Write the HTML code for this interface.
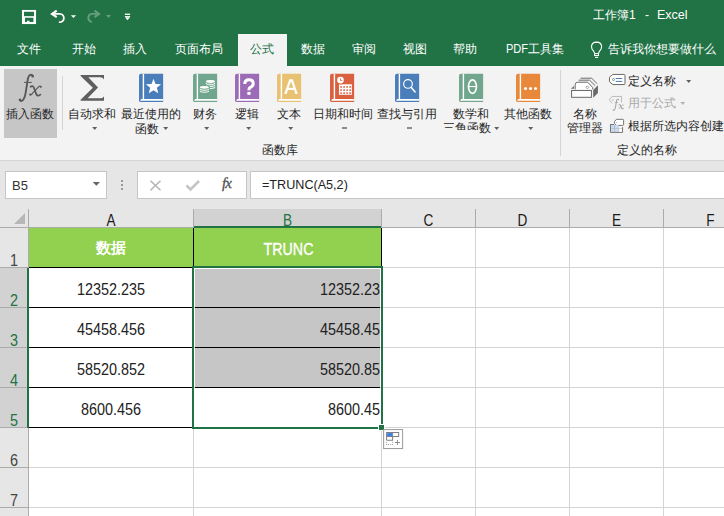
<!DOCTYPE html>
<html><head><meta charset="utf-8">
<style>
*{margin:0;padding:0;box-sizing:border-box}
html,body{width:724px;height:516px;overflow:hidden;background:#fff;font-family:"Liberation Sans",sans-serif}
.a{position:absolute}
.t{position:absolute;white-space:nowrap;line-height:1}
#title{left:0;top:0;width:724px;height:66px;background:#217346}
#ribbon{left:0;top:66px;width:724px;height:94px;background:#f3f3f3}
#rbl{left:0;top:160px;width:724px;height:1px;background:#d5d5d5}
#fbar{left:0;top:161px;width:724px;height:66px;background:#e6e6e6}
.tab{color:#fff;font-size:12px}
.rt{color:#262626;font-size:12px;font-weight:500}
.gl{background:#d4d4d4}
.hl{background:#ababab}
.cell{position:absolute;white-space:nowrap;line-height:1;font-size:15px;color:#222}
</style></head><body>
<div id="title" class="a"></div>
<div id="ribbon" class="a"></div>
<div id="rbl" class="a"></div>
<div id="fbar" class="a"></div>

<!-- active tab -->
<div class="a" style="left:238px;top:34px;width:49px;height:32px;background:#f3f3f3"></div>

<!-- tabs text -->
<div class="t tab" style="left:17px;top:43px">文件</div>
<div class="t tab" style="left:72px;top:43px">开始</div>
<div class="t tab" style="left:123px;top:43px">插入</div>
<div class="t tab" style="left:175px;top:43px">页面布局</div>
<div class="t tab" style="left:250px;top:43px;color:#217346">公式</div>
<div class="t tab" style="left:301px;top:43px">数据</div>
<div class="t tab" style="left:352px;top:43px">审阅</div>
<div class="t tab" style="left:403px;top:43px">视图</div>
<div class="t tab" style="left:453px;top:43px">帮助</div>
<div class="t tab" style="left:506px;top:43px"><span style="display:inline-block;transform:scaleX(.92);transform-origin:left;margin-right:-2px">PDF</span>工具集</div>
<div class="t tab" style="left:608px;top:43px">告诉我你想要做什么</div>
<div class="t tab" style="left:593px;top:9px">工作簿1</div><div class="t tab" style="left:645px;top:9px">-</div><div class="t tab" style="left:657px;top:9px;font-size:12.5px">Excel</div>

<!-- formula bar -->
<div class="a" style="left:5px;top:171px;width:102px;height:28px;background:#fff;border:1px solid #c6c6c6"></div>
<div class="t" style="left:12px;top:179px;font-size:13px;color:#333">B5</div>
<div class="a" style="left:137px;top:171px;width:110px;height:28px;background:#fff;border:1px solid #c6c6c6"></div>
<div class="a" style="left:250px;top:171px;width:474px;height:28px;background:#fff;border:1px solid #c6c6c6;border-right:none"></div>
<div class="t" style="left:262px;top:178px;font-size:13px;color:#222;transform:scaleX(.97);transform-origin:left">=TRUNC(A5,2)</div>

<!-- grid -->
<div id="rib">
<div class="a" style="left:4px;top:69px;width:53px;height:69px;background:#c6c6c6"></div>
<svg class="a" style="left:14px;top:70px" width="32" height="36" viewBox="0 0 459 516"><path d="M272 88Q258 58 228 72Q202 88 193 165L168 320Q152 420 118 440Q92 452 82 428" fill="none" stroke="#585858" stroke-width="27" stroke-linecap="round"/><circle cx="268" cy="90" r="17" fill="#585858"/><circle cx="86" cy="425" r="17" fill="#585858"/><path d="M145 178H255" stroke="#585858" stroke-width="15"/><path d="M238 240Q272 215 290 265L318 342Q335 388 378 352" fill="none" stroke="#585858" stroke-width="25" stroke-linecap="round"/><path d="M388 238Q372 218 345 248L258 342Q238 370 226 352" fill="none" stroke="#585858" stroke-width="16" stroke-linecap="round"/><circle cx="383" cy="242" r="14" fill="#585858"/><circle cx="232" cy="352" r="14" fill="#585858"/></svg>
<div class="t rt" style="left:6px;top:108px;">插入函数</div>
<div class="a" style="left:62px;top:76px;width:1px;height:54px;background:#d4d4d4"></div>
<svg class="a" style="left:74px;top:70px" width="36" height="36" viewBox="0 0 516 516"><path d="M95 70H430V135Q420 108 380 105H205L345 250L195 405H385Q420 402 430 375V440H95V425L270 255L95 85Z" fill="#5f5f5f"/></svg>
<div class="t rt" style="left:68px;top:108px;">自动求和</div>
<svg class="a" style="left:92px;top:127px" width="6" height="4" viewBox="0 0 6 4"><path d="M0.2 0H5.2L2.7 3Z" fill="#606060"/></svg>
<svg class="a" style="left:134px;top:70px" width="35" height="36" viewBox="0 0 502 516"><path d="M100 55H418V460H100Q72 460 72 432V83Q72 55 100 55Z" fill="#4a7ebb"/><rect x="125" y="55" width="20" height="362" fill="#fff"/><path d="M86 440L104 415H418V440Z" fill="#fff"/><polygon points="280,125 309,200 389,204 328,255 348,333 280,290 212,333 232,255 171,204 251,200" fill="#fff"/></svg>
<div class="t rt" style="left:121px;top:108px;">最近使用的</div>
<div class="t rt" style="left:135px;top:123px;">函数</div>
<svg class="a" style="left:163px;top:127px" width="6" height="4" viewBox="0 0 6 4"><path d="M0.2 0H5.2L2.7 3Z" fill="#606060"/></svg>
<svg class="a" style="left:188px;top:70px" width="35" height="36" viewBox="0 0 502 516"><path d="M100 55H418V460H100Q72 460 72 432V83Q72 55 100 55Z" fill="#6fa68d"/><rect x="125" y="55" width="20" height="362" fill="#fff"/><path d="M86 440L104 415H418V440Z" fill="#fff"/><path d="M260 185A62 20 0 0 0 384 185" fill="none" stroke="#fff" stroke-width="15"/><path d="M260 215A62 20 0 0 0 384 215" fill="none" stroke="#fff" stroke-width="15"/><path d="M260 245A62 20 0 0 0 384 245" fill="none" stroke="#fff" stroke-width="15"/><ellipse cx="322" cy="165" rx="64" ry="21" fill="#fff"/><path d="M168 249V329A67 22 0 0 0 302 329V249Z" fill="#6fa68d" stroke="#6fa68d" stroke-width="24"/><ellipse cx="235" cy="249" rx="67" ry="22" fill="#6fa68d" stroke="#6fa68d" stroke-width="24"/><path d="M173 269A62 20 0 0 0 297 269" fill="none" stroke="#fff" stroke-width="15"/><path d="M173 299A62 20 0 0 0 297 299" fill="none" stroke="#fff" stroke-width="15"/><ellipse cx="235" cy="249" rx="64" ry="21" fill="#fff"/></svg>
<div class="t rt" style="left:193px;top:108px;">财务</div>
<svg class="a" style="left:204px;top:127px" width="6" height="4" viewBox="0 0 6 4"><path d="M0.2 0H5.2L2.7 3Z" fill="#606060"/></svg>
<svg class="a" style="left:230px;top:70px" width="35" height="36" viewBox="0 0 502 516"><path d="M100 55H418V460H100Q72 460 72 432V83Q72 55 100 55Z" fill="#9b6bb7"/><rect x="125" y="55" width="20" height="362" fill="#fff"/><path d="M86 440L104 415H418V440Z" fill="#fff"/><path d="M212 200Q212 140 272 140Q333 140 333 195Q333 232 292 250Q272 260 272 280V292" fill="none" stroke="#fff" stroke-width="44"/><rect x="249" y="314" width="46" height="42" fill="#fff"/></svg>
<div class="t rt" style="left:235px;top:108px;">逻辑</div>
<svg class="a" style="left:246px;top:127px" width="6" height="4" viewBox="0 0 6 4"><path d="M0.2 0H5.2L2.7 3Z" fill="#606060"/></svg>
<svg class="a" style="left:272px;top:70px" width="35" height="36" viewBox="0 0 502 516"><path d="M100 55H418V460H100Q72 460 72 432V83Q72 55 100 55Z" fill="#e8c173"/><rect x="125" y="55" width="20" height="362" fill="#fff"/><path d="M86 440L104 415H418V440Z" fill="#fff"/><path d="M176 345L248 132H298L370 345H336L317 288H229L210 345ZM239 256H307L273 160Z" fill="#fff" fill-rule="evenodd"/></svg>
<div class="t rt" style="left:277px;top:108px;">文本</div>
<svg class="a" style="left:288px;top:127px" width="6" height="4" viewBox="0 0 6 4"><path d="M0.2 0H5.2L2.7 3Z" fill="#606060"/></svg>
<svg class="a" style="left:325px;top:70px" width="35" height="36" viewBox="0 0 502 516"><path d="M100 55H418V460H100Q72 460 72 432V83Q72 55 100 55Z" fill="#d9613f"/><rect x="125" y="55" width="20" height="362" fill="#fff"/><path d="M86 440L104 415H418V440Z" fill="#fff"/><rect x="200" y="205" width="185" height="150" fill="#fff"/><rect x="218" y="232" width="24" height="22" fill="#d9613f"/><rect x="262" y="232" width="24" height="22" fill="#d9613f"/><rect x="305" y="232" width="24" height="22" fill="#d9613f"/><rect x="348" y="232" width="24" height="22" fill="#d9613f"/><rect x="218" y="277" width="24" height="22" fill="#d9613f"/><rect x="262" y="277" width="24" height="22" fill="#d9613f"/><rect x="305" y="277" width="24" height="22" fill="#d9613f"/><rect x="348" y="277" width="24" height="22" fill="#d9613f"/><rect x="218" y="320" width="24" height="22" fill="#d9613f"/><rect x="262" y="320" width="24" height="22" fill="#d9613f"/><rect x="305" y="320" width="24" height="22" fill="#d9613f"/><rect x="348" y="320" width="24" height="22" fill="#d9613f"/><circle cx="222" cy="145" r="62" fill="#d9613f"/><circle cx="222" cy="145" r="48" fill="#fff"/><path d="M222 118V150H248" fill="none" stroke="#d9613f" stroke-width="12"/></svg>
<div class="t rt" style="left:313px;top:108px;">日期和时间</div>
<div class="a" style="left:342px;top:127px;width:5px;height:2px;background:#8c8c8c"></div>
<svg class="a" style="left:390px;top:70px" width="35" height="36" viewBox="0 0 502 516"><path d="M100 55H418V460H100Q72 460 72 432V83Q72 55 100 55Z" fill="#4a7ebb"/><rect x="125" y="55" width="20" height="362" fill="#fff"/><path d="M86 440L104 415H418V440Z" fill="#fff"/><circle cx="258" cy="200" r="62" fill="none" stroke="#fff" stroke-width="17"/><path d="M305 250L360 315" stroke="#fff" stroke-width="22" stroke-linecap="round"/></svg>
<div class="t rt" style="left:377px;top:108px;">查找与引用</div>
<div class="a" style="left:407px;top:127px;width:5px;height:2px;background:#8c8c8c"></div>
<svg class="a" style="left:454px;top:70px" width="35" height="36" viewBox="0 0 502 516"><path d="M100 55H418V460H100Q72 460 72 432V83Q72 55 100 55Z" fill="#6fa68d"/><rect x="125" y="55" width="20" height="362" fill="#fff"/><path d="M86 440L104 415H418V440Z" fill="#fff"/><ellipse cx="265" cy="238" rx="57" ry="97" fill="none" stroke="#fff" stroke-width="24"/><rect x="210" y="229" width="110" height="16" fill="#fff"/></svg>
<div class="t rt" style="left:453px;top:108px;">数学和</div>
<div class="a" style="left:443px;top:121px;width:36px;height:9px;overflow:hidden"><div class="t rt" style="left:0;top:1px">三角函</div></div>
<div class="t rt" style="left:479px;top:122px;">数</div>
<svg class="a" style="left:494px;top:127px" width="6" height="4" viewBox="0 0 6 4"><path d="M0.2 0H5.2L2.7 3Z" fill="#606060"/></svg>
<svg class="a" style="left:511px;top:70px" width="35" height="36" viewBox="0 0 502 516"><path d="M100 55H418V460H100Q72 460 72 432V83Q72 55 100 55Z" fill="#e8883a"/><rect x="125" y="55" width="20" height="362" fill="#fff"/><path d="M86 440L104 415H418V440Z" fill="#fff"/><circle cx="208" cy="265" r="22" fill="#fff"/><circle cx="280" cy="265" r="22" fill="#fff"/><circle cx="352" cy="265" r="22" fill="#fff"/></svg>
<div class="t rt" style="left:504px;top:108px;">其他函数</div>
<svg class="a" style="left:528px;top:127px" width="6" height="4" viewBox="0 0 6 4"><path d="M0.2 0H5.2L2.7 3Z" fill="#606060"/></svg>
<div class="t rt" style="left:262px;top:144px;">函数库</div>
<div class="a" style="left:560px;top:70px;width:1px;height:86px;background:#d4d4d4"></div>
<svg class="a" style="left:566px;top:72px" width="40" height="32" viewBox="0 0 645 516"><path d="M235 100H415L500 188" fill="none" stroke="#6a6a6a" stroke-width="16"/><path d="M205 132H380L470 220" fill="none" stroke="#6a6a6a" stroke-width="16"/><path d="M148 280V205Q148 165 190 165H350L430 250V280" fill="#fff" stroke="#6a6a6a" stroke-width="16"/><rect x="327" y="230" width="34" height="34" transform="rotate(45 344 247)" fill="none" stroke="#6a6a6a" stroke-width="10"/><path d="M80 272L128 226V272Z" fill="#6a6a6a"/><rect x="90" y="298" width="320" height="110" fill="#fff" stroke="#6a6a6a" stroke-width="16"/><path d="M438 290L515 212V340L438 415Z" fill="#6a6a6a"/></svg>
<div class="t rt" style="left:573px;top:108px;">名称</div>
<div class="t rt" style="left:567px;top:122px;">管理器</div>
<svg class="a" style="left:606px;top:72px" width="22" height="18" viewBox="0 0 631 516"><path d="M195 70H520Q545 70 545 95V335Q545 360 520 360H195L100 280V150Z" fill="#fff" stroke="#666" stroke-width="28" stroke-linejoin="round"/><circle cx="215" cy="215" r="30" fill="none" stroke="#666" stroke-width="20"/><path d="M290 185H455M290 270H455" stroke="#2e6fb5" stroke-width="26" stroke-linecap="round"/></svg>
<div class="t rt" style="left:628px;top:75px;">定义名称</div>
<svg class="a" style="left:686px;top:80px" width="6" height="4" viewBox="0 0 6 4"><path d="M0.2 0H5.2L2.7 3Z" fill="#606060"/></svg>
<svg class="a" style="left:606px;top:94px" width="22" height="18" viewBox="0 0 631 516"><path d="M445 240V70H175L95 165L180 270" fill="none" stroke="#b4b4b4" stroke-width="26"/><circle cx="200" cy="170" r="22" fill="#b4b4b4"/><g transform="translate(132 94) scale(.846)"><path d="M272 88Q258 58 228 72Q202 88 193 165L168 320Q152 420 118 440Q92 452 82 428" fill="none" stroke="#a2a2a2" stroke-width="36" stroke-linecap="round"/><path d="M145 178H255" stroke="#a2a2a2" stroke-width="24"/><g transform="translate(50 20)"><path d="M238 240Q272 215 290 265L318 342Q335 388 378 352" fill="none" stroke="#a2a2a2" stroke-width="34" stroke-linecap="round"/><path d="M388 238Q372 218 345 248L258 342Q238 370 226 352" fill="none" stroke="#a2a2a2" stroke-width="24" stroke-linecap="round"/></g></g></svg>
<div class="t rt" style="left:628px;top:97px;;color:#a8a8a8">用于公式</div>
<svg class="a" style="left:680px;top:102px" width="6" height="4" viewBox="0 0 6 4"><path d="M0.2 0H5.2L2.7 3Z" fill="#b4b4b4"/></svg>
<svg class="a" style="left:606px;top:116px" width="22" height="18" viewBox="0 0 631 516"><path d="M300 95H480Q505 95 505 120V245Q505 270 480 270H300L245 215V155Z" fill="#fff" stroke="#666" stroke-width="26"/><circle cx="305" cy="183" r="14" fill="#666"/><path d="M135 245H230L300 325H470V460H135Z" fill="#fff"/><rect x="145" y="255" width="210" height="200" fill="#c5dcf2"/><path d="M135 355H470M245 255V460M360 325V460" stroke="#b4b4b4" stroke-width="18"/><path d="M128 245H230M128 240V470H475V320" fill="none" stroke="#666" stroke-width="26"/></svg>
<div class="t rt" style="left:628px;top:120px;">根据所选内容创建</div>
<div class="t rt" style="left:617px;top:144px;">定义的名称</div>
<svg class="a" style="left:586px;top:38px" width="24" height="24" viewBox="0 0 516 516"><path d="M185 322L165 285Q115 235 118 182Q125 90 227 88Q330 90 336 182Q338 235 290 285L270 322" fill="none" stroke="#fff" stroke-width="24"/><rect x="185" y="335" width="85" height="42" fill="none" stroke="#fff" stroke-width="22"/><rect x="195" y="405" width="65" height="25" fill="#fff"/></svg>
<svg class="a" style="left:0;top:0" width="60" height="35" viewBox="0 0 724 422"><rect x="265" y="120" width="170" height="170" fill="#fff"/><rect x="290" y="142" width="120" height="53" fill="#217346"/><path d="M302 215H403V265H355V250H325V265H302Z" fill="#217346"/></svg>
<svg class="a" style="left:46px;top:6px" width="34" height="22" viewBox="0 0 724 468"><path d="M228 97L128 168L228 239" fill="none" stroke="#fff" stroke-width="46"/><path d="M140 168H295A88 88 0 0 1 290 344" fill="none" stroke="#fff" stroke-width="38" stroke-linecap="round"/><path d="M530 195H640L585 255Z" fill="#fff"/></svg>
<svg class="a" style="left:82px;top:6px" width="54" height="22" viewBox="0 0 724 295" opacity="0.3"><path d="M168 62L228 106L168 150" fill="none" stroke="#fff" stroke-width="28"/><path d="M220 106H125A55 55 0 0 0 125 212" fill="none" stroke="#fff" stroke-width="26" stroke-linecap="round"/><path d="M320 120H390L355 160Z" fill="#fff"/></svg>
<svg class="a" style="left:82px;top:6px" width="54" height="22" viewBox="0 0 724 295"><rect x="575" y="102" width="70" height="18" fill="#fff"/><rect x="575" y="135" width="70" height="12" fill="#fff"/><path d="M575 150H645L610 190Z" fill="#fff"/></svg>
<svg class="a" style="left:91px;top:181px" width="10" height="6" viewBox="0 0 10 6"><path d="M1.7 1H9L5.35 4.8Z" fill="#666"/></svg>
<div class="a" style="left:121px;top:180px;width:2px;height:2px;background:#9a9a9a"></div>
<div class="a" style="left:121px;top:184px;width:2px;height:2px;background:#9a9a9a"></div>
<div class="a" style="left:121px;top:188px;width:2px;height:2px;background:#9a9a9a"></div>
<svg class="a" style="left:148px;top:179px" width="15" height="13" viewBox="0 0 15 13"><path d="M2.5 1.8L12.5 11.2M12.5 1.8L2.5 11.2" stroke="#b2b2b2" stroke-width="1.5"/></svg>
<svg class="a" style="left:185px;top:179px" width="16" height="13" viewBox="0 0 16 13"><path d="M1.5 6.5L5.5 10.5L14 2" fill="none" stroke="#c4c4c4" stroke-width="2.6"/></svg>
<div class="t" style="left:222px;top:176px;font-family:'Liberation Serif',serif;font-style:italic;font-size:15px;color:#505050;letter-spacing:-1px;-webkit-text-stroke:.3px #505050">f<span style="font-size:15px">x</span></div>
<svg class="a" style="left:13px;top:212px" width="13" height="13" viewBox="0 0 13 13"><path d="M12 1V12H1Z" fill="#b7b7b7"/></svg>

</div><!--rib-->
<div id="grid">
<div class="a" style="left:0px;top:228px;width:28px;height:288px;background:#e6e6e6;"></div>
<div class="a" style="left:0px;top:268px;width:27px;height:160px;background:#d2d2d2;"></div>
<div class="a" style="left:194px;top:209px;width:187px;height:17px;background:#d2d2d2;"></div>
<div class="a" style="left:29px;top:267px;width:695px;height:1px;background:#d4d4d4;"></div>
<div class="a" style="left:29px;top:307px;width:695px;height:1px;background:#d4d4d4;"></div>
<div class="a" style="left:29px;top:347px;width:695px;height:1px;background:#d4d4d4;"></div>
<div class="a" style="left:29px;top:387px;width:695px;height:1px;background:#d4d4d4;"></div>
<div class="a" style="left:29px;top:427px;width:695px;height:1px;background:#d4d4d4;"></div>
<div class="a" style="left:29px;top:467px;width:695px;height:1px;background:#d4d4d4;"></div>
<div class="a" style="left:29px;top:507px;width:695px;height:1px;background:#d4d4d4;"></div>
<div class="a" style="left:193px;top:228px;width:1px;height:288px;background:#d4d4d4;"></div>
<div class="a" style="left:381px;top:228px;width:1px;height:288px;background:#d4d4d4;"></div>
<div class="a" style="left:475px;top:228px;width:1px;height:288px;background:#d4d4d4;"></div>
<div class="a" style="left:569px;top:228px;width:1px;height:288px;background:#d4d4d4;"></div>
<div class="a" style="left:663px;top:228px;width:1px;height:288px;background:#d4d4d4;"></div>
<div class="a" style="left:757px;top:228px;width:1px;height:288px;background:#d4d4d4;"></div>
<div class="a" style="left:0px;top:227px;width:724px;height:1px;background:#ababab;"></div>
<div class="a" style="left:28px;top:209px;width:1px;height:18px;background:#ababab;"></div>
<div class="a" style="left:193px;top:209px;width:1px;height:18px;background:#ababab;"></div>
<div class="a" style="left:381px;top:209px;width:1px;height:18px;background:#ababab;"></div>
<div class="a" style="left:475px;top:209px;width:1px;height:18px;background:#ababab;"></div>
<div class="a" style="left:569px;top:209px;width:1px;height:18px;background:#ababab;"></div>
<div class="a" style="left:663px;top:209px;width:1px;height:18px;background:#ababab;"></div>
<div class="a" style="left:757px;top:209px;width:1px;height:18px;background:#ababab;"></div>
<div class="a" style="left:28px;top:228px;width:1px;height:288px;background:#ababab;"></div>
<div class="a" style="left:0px;top:267px;width:28px;height:1px;background:#ababab;"></div>
<div class="a" style="left:0px;top:307px;width:28px;height:1px;background:#ababab;"></div>
<div class="a" style="left:0px;top:347px;width:28px;height:1px;background:#ababab;"></div>
<div class="a" style="left:0px;top:387px;width:28px;height:1px;background:#ababab;"></div>
<div class="a" style="left:0px;top:427px;width:28px;height:1px;background:#ababab;"></div>
<div class="a" style="left:0px;top:467px;width:28px;height:1px;background:#ababab;"></div>
<div class="a" style="left:0px;top:507px;width:28px;height:1px;background:#ababab;"></div>
<div class="a" style="left:194px;top:226px;width:187px;height:2px;background:#217346;"></div>
<div class="a" style="left:27px;top:268px;width:2px;height:160px;background:#217346;"></div>
<div class="a" style="left:29px;top:228px;width:164px;height:39px;background:#92d050;"></div>
<div class="a" style="left:194px;top:228px;width:187px;height:39px;background:#92d050;"></div>
<div class="a" style="left:195px;top:269px;width:185px;height:118px;background:#c6c6c6;"></div>
<div class="a" style="left:29px;top:267px;width:163px;height:1px;background:#000;"></div>
<div class="a" style="left:29px;top:307px;width:163px;height:1px;background:#000;"></div>
<div class="a" style="left:29px;top:347px;width:163px;height:1px;background:#000;"></div>
<div class="a" style="left:29px;top:387px;width:163px;height:1px;background:#000;"></div>
<div class="a" style="left:29px;top:427px;width:163px;height:1px;background:#000;"></div>
<div class="a" style="left:195px;top:307px;width:185px;height:1px;background:#000;"></div>
<div class="a" style="left:195px;top:347px;width:185px;height:1px;background:#000;"></div>
<div class="a" style="left:195px;top:387px;width:185px;height:1px;background:#000;"></div>
<div class="a" style="left:29px;top:267px;width:353px;height:1px;background:#000;"></div>
<div class="a" style="left:193px;top:228px;width:1px;height:200px;background:#000;"></div>
<div class="a" style="left:381px;top:228px;width:1px;height:40px;background:#000;"></div>
<div class="a" style="left:192px;top:266px;width:191px;height:2px;background:#217346;"></div>
<div class="a" style="left:381px;top:266px;width:2px;height:163px;background:#217346;"></div>
<div class="a" style="left:192px;top:266px;width:2px;height:163px;background:#217346;"></div>
<div class="a" style="left:192px;top:427px;width:191px;height:2px;background:#217346;"></div>

</div><!--grid-->
<div id="txt">
<div class="t" style="left:29px;width:164px;text-align:center;top:213px;font-size:16px;color:#1a1a1a;transform:scaleX(.85)">A</div>
<div class="t" style="left:194px;width:187px;text-align:center;top:213px;font-size:16px;color:#217346;transform:scaleX(.85)">B</div>
<div class="t" style="left:382px;width:93px;text-align:center;top:213px;font-size:16px;color:#1a1a1a;transform:scaleX(.85)">C</div>
<div class="t" style="left:476px;width:93px;text-align:center;top:213px;font-size:16px;color:#1a1a1a;transform:scaleX(.85)">D</div>
<div class="t" style="left:570px;width:93px;text-align:center;top:213px;font-size:16px;color:#1a1a1a;transform:scaleX(.85)">E</div>
<div class="t" style="left:664px;width:93px;text-align:center;top:213px;font-size:16px;color:#1a1a1a;transform:scaleX(.85)">F</div>
<div class="t" style="left:0;width:28px;text-align:center;top:253px;font-size:16px;color:#444;transform:scaleX(.9)">1</div>
<div class="t" style="left:0;width:28px;text-align:center;top:293px;font-size:16px;color:#217346;transform:scaleX(.9)">2</div>
<div class="t" style="left:0;width:28px;text-align:center;top:333px;font-size:16px;color:#217346;transform:scaleX(.9)">3</div>
<div class="t" style="left:0;width:28px;text-align:center;top:373px;font-size:16px;color:#217346;transform:scaleX(.9)">4</div>
<div class="t" style="left:0;width:28px;text-align:center;top:413px;font-size:16px;color:#217346;transform:scaleX(.9)">5</div>
<div class="t" style="left:0;width:28px;text-align:center;top:453px;font-size:16px;color:#444;transform:scaleX(.9)">6</div>
<div class="t" style="left:0;width:28px;text-align:center;top:493px;font-size:16px;color:#444;transform:scaleX(.9)">7</div>
<div class="t" style="left:0;width:28px;text-align:center;top:533px;font-size:16px;color:#444;transform:scaleX(.9)">8</div>
<div class="t" style="left:29px;width:164px;text-align:center;top:240px;font-size:15px;font-weight:bold;color:#fff">数据</div>
<div class="t" style="left:195px;width:187px;text-align:center;top:242px;font-size:16px;color:#fff;transform:scaleX(.89);-webkit-text-stroke:.35px #fff">TRUNC</div>
<div class="t" style="left:29px;width:164px;text-align:center;top:282px;font-size:16px;color:#222;transform:scaleX(.9)">12352.235</div>
<div class="t" style="left:194px;width:186px;text-align:right;top:282px;font-size:16px;color:#222;transform:scaleX(.9);transform-origin:right">12352.23</div>
<div class="t" style="left:29px;width:164px;text-align:center;top:322px;font-size:16px;color:#222;transform:scaleX(.9)">45458.456</div>
<div class="t" style="left:194px;width:186px;text-align:right;top:322px;font-size:16px;color:#222;transform:scaleX(.9);transform-origin:right">45458.45</div>
<div class="t" style="left:29px;width:164px;text-align:center;top:362px;font-size:16px;color:#222;transform:scaleX(.9)">58520.852</div>
<div class="t" style="left:194px;width:186px;text-align:right;top:362px;font-size:16px;color:#222;transform:scaleX(.9);transform-origin:right">58520.85</div>
<div class="t" style="left:29px;width:164px;text-align:center;top:402px;font-size:16px;color:#222;transform:scaleX(.9)">8600.456</div>
<div class="t" style="left:194px;width:186px;text-align:right;top:402px;font-size:16px;color:#222;transform:scaleX(.9);transform-origin:right">8600.45</div>
<div class="a" style="left:378px;top:424px;width:7px;height:7px;background:#fff"></div>
<div class="a" style="left:379px;top:425px;width:5px;height:5px;background:#217346"></div>
<svg class="a" style="left:365px;top:415px" width="45" height="40" viewBox="0 0 580 516"><rect x="240" y="188" width="245" height="245" fill="#fff" stroke="#9a9a9a" stroke-width="13"/><path d="M278 326V226H434V278H278M356 226V326H278" fill="none" stroke="#808080" stroke-width="13"/><rect x="285" y="233" width="65" height="39" fill="#3b7ded"/><path d="M272 353H284M350 353H362M272 381H284M298 381H310M324 381H336M350 381H362" stroke="#909090" stroke-width="12"/><path d="M385 355H452M418 322V388" stroke="#888" stroke-width="12"/></svg>

</div><!--txt-->
</body></html>
